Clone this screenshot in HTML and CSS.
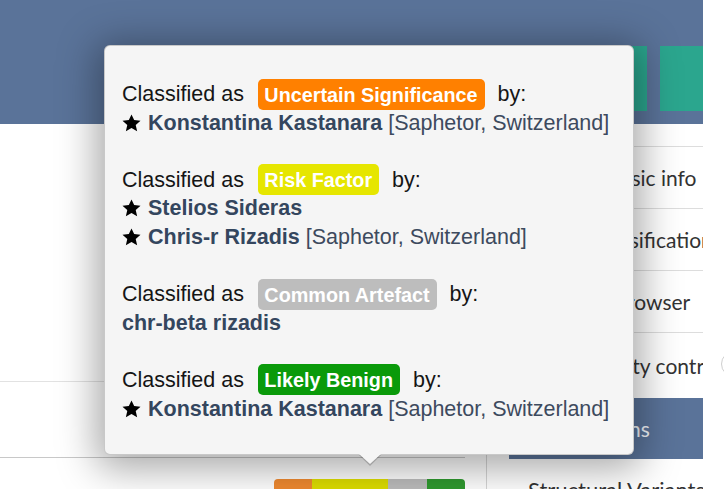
FILE: index.html
```html
<!DOCTYPE html>
<html>
<head>
<meta charset="utf-8">
<link rel="stylesheet" href="styles.css">
</head>
<body>
<div class="page">
  <header class="topbar">
    <div class="btn btn-a"></div>
    <div class="btn btn-b"></div>
  </header>
  <div class="content">
    <main class="main">
      <div class="row row-top"></div>
      <div class="row row-mid"></div>
      <div class="bar">
        <span class="seg seg-o"></span><span class="seg seg-y"></span><span class="seg seg-g"></span><span class="seg seg-b"></span>
      </div>
    </main>
    <aside class="side">
      <div class="side-head"></div>
      <div class="side-item"><span>Basic info</span></div>
      <div class="side-item"><span>Classification</span></div>
      <div class="side-item"><span>Browser</span></div>
      <div class="side-item last"><span>Quality control</span></div>
      <div class="side-block">Annotations</div>
      <div class="side-plain">Structural Variants</div>
    </aside>
  </div>

  <div class="popover">
    <div class="group">
      <div class="line">Classified as <span class="badge b-uncertain">Uncertain Significance</span> by:</div>
      <div class="line"><svg class="star" viewBox="0 0 24 23"><path d="M12 0.5l3.4 7.3 8.1.8-6.1 5.4 1.8 8L12 17.8 4.8 22l1.8-8L.5 8.6l8.1-.8z"/></svg><b class="name">Konstantina Kastanara</b> <span class="aff">[Saphetor, Switzerland]</span></div>
    </div>
    <div class="group">
      <div class="line">Classified as <span class="badge b-risk">Risk Factor</span> by:</div>
      <div class="line"><svg class="star" viewBox="0 0 24 23"><path d="M12 0.5l3.4 7.3 8.1.8-6.1 5.4 1.8 8L12 17.8 4.8 22l1.8-8L.5 8.6l8.1-.8z"/></svg><b class="name">Stelios Sideras</b></div>
      <div class="line"><svg class="star" viewBox="0 0 24 23"><path d="M12 0.5l3.4 7.3 8.1.8-6.1 5.4 1.8 8L12 17.8 4.8 22l1.8-8L.5 8.6l8.1-.8z"/></svg><b class="name">Chris-r Rizadis</b> <span class="aff">[Saphetor, Switzerland]</span></div>
    </div>
    <div class="group">
      <div class="line">Classified as <span class="badge b-artefact">Common Artefact</span> by:</div>
      <div class="line"><b class="name">chr-beta rizadis</b></div>
    </div>
    <div class="group">
      <div class="line">Classified as <span class="badge b-benign">Likely Benign</span> by:</div>
      <div class="line"><svg class="star" viewBox="0 0 24 23"><path d="M12 0.5l3.4 7.3 8.1.8-6.1 5.4 1.8 8L12 17.8 4.8 22l1.8-8L.5 8.6l8.1-.8z"/></svg><b class="name">Konstantina Kastanara</b> <span class="aff">[Saphetor, Switzerland]</span></div>
    </div>
  </div>

  <div class="fab"></div>
</div>
</body>
</html>
```

FILE: styles.css
```css
html, body {
  margin: 0;
  padding: 0;
  background: #ffffff;
}

.page {
  position: relative;
  width: 724px;
  height: 489px;
  overflow: hidden;
  font-family: "Liberation Sans", Arial, sans-serif;
}

.topbar {
  width: 703px;
  height: 124px;
  box-sizing: border-box;
  background: #5a7399;
  display: flex;
  justify-content: flex-end;
  gap: 13px;
  padding-top: 46px;
}

.btn {
  height: 65px;
  background: #2ba68e;
}

.btn-a { width: 87px; }
.btn-b { width: 43px; }

.content {
  display: flex;
  width: 703px;
  gap: 22px;
  overflow: hidden;
  height: 365px;
}

.main {
  width: 486px;
  flex-shrink: 0;
  border-right: 1px solid #d6d6d6;
}

.row {
  width: 465px;
}

.row-top {
  height: 257px;
  border-bottom: 1px solid #e2e2e2;
}

.row-mid {
  height: 75px;
  border-bottom: 1px solid #c8c8c8;
}

.bar {
  display: flex;
  margin-left: 274px;
  margin-top: 21px;
  width: 191px;
  height: 12px;
  border-radius: 4px 4px 0 0;
  overflow: hidden;
}

.seg { display: block; height: 100%; }
.seg-o { width: 38px; background: #f08a30; }
.seg-y { width: 76px; background: #dede00; }
.seg-g { width: 39px; background: #bdbdbd; }
.seg-b { width: 38px; background: #2f9a2f; }

.side {
  flex: 1;
  min-width: 0;
  font-family: Lato, "Open Sans", sans-serif;
  font-size: 21px;
  color: #333333;
}

.side-head {
  height: 22px;
  border-bottom: 1px solid #dddddd;
}

.side-item {
  height: 61px;
  border-bottom: 1px solid #dddddd;
  display: flex;
  align-items: center;
  justify-content: center;
  margin-left: 92px;
  white-space: nowrap;
}

.side-item span { flex-shrink: 0; }

.side-item.last {
  border-bottom: 0;
  height: 65px;
}

.side-block {
  height: 61px;
  background: #5a7399;
  color: #f2f5f9;
  display: flex;
  align-items: center;
  padding-left: 28px;
  white-space: nowrap;
}

.side-plain {
  padding: 18px 0 0 19px;
  line-height: 25px;
  font-size: 22px;
  white-space: nowrap;
}

.popover {
  position: absolute;
  left: 104px;
  top: 45px;
  width: 530px;
  height: 410px;
  box-sizing: border-box;
  padding: 34px 17px 0 17px;
  background: #f5f5f5;
  border: 1px solid rgba(0, 0, 0, 0.18);
  border-radius: 6px;
  box-shadow: 0 6px 38px 8px rgba(0, 0, 0, 0.34);
  font-size: 21.5px;
  line-height: 28.6px;
  color: #151515;
}

.popover::before,
.popover::after {
  content: "";
  position: absolute;
  left: 254px;
  width: 0;
  height: 0;
  border-left: 11px solid transparent;
  border-right: 11px solid transparent;
}

.popover::before {
  bottom: -12px;
  border-top: 11px solid rgba(0, 0, 0, 0.2);
}

.popover::after {
  bottom: -10px;
  border-top: 10px solid #f5f5f5;
}

.group {
  margin-bottom: 28.6px;
}

.line {
  white-space: nowrap;
}

.badge {
  font-weight: bold;
  font-size: 19.8px;
  color: #ffffff;
  padding: 4.5px 7px 4.5px 6.5px;
  border-radius: 5px;
  margin-left: 8px;
  margin-right: 7px;
}

.b-uncertain { background: #ff8000; }
.b-risk { background: #e6e600; }
.b-artefact { background: #bdbdbd; }
.b-benign { background: #0a9a0a; }

.star {
  width: 19px;
  height: 18px;
  fill: #000000;
  vertical-align: -2px;
  margin-right: 7px;
}

.name {
  color: #34465e;
}

.aff {
  color: #3d4a5e;
}

.fab {
  position: absolute;
  left: 721px;
  top: 351px;
  width: 24px;
  height: 24px;
  border: 1px solid #cfcfcf;
  border-radius: 50%;
}
```
